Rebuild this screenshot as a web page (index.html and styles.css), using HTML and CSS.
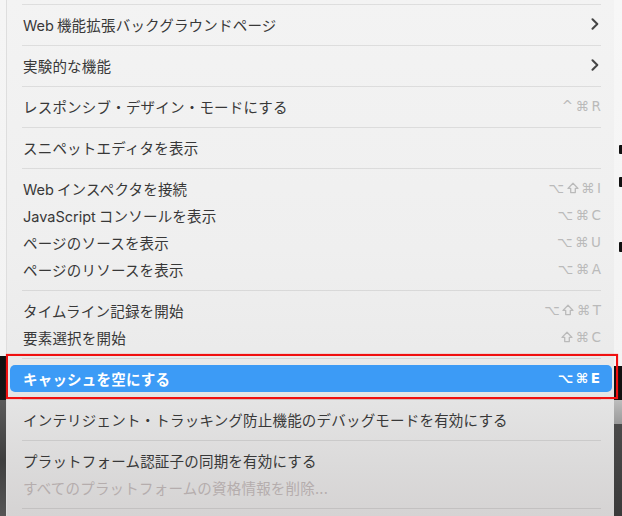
FILE: index.html
```html
<!DOCTYPE html>
<html lang="ja">
<head>
<meta charset="utf-8">
<title>開発メニュー</title>
<link rel="stylesheet" href="styles.css">
</head>
<body>
<div class="screen">
  <div class="edge-left"></div>
  <div class="menu">
    <div class="sep"></div>
    <div class="group">
      <div class="row"><span class="label"><span class="lat">Web</span>機能拡張バックグラウンドページ</span><svg class="chev" width="8" height="12" viewBox="0 0 8 12"><path d="M1.5 1.2 L6.3 6 L1.5 10.8" fill="none" stroke="#454545" stroke-width="2" stroke-linecap="round" stroke-linejoin="round"/></svg></div>
    </div>
    <div class="sep"></div>
    <div class="group">
      <div class="row"><span class="label">実験的な機能</span><svg class="chev" width="8" height="12" viewBox="0 0 8 12"><path d="M1.5 1.2 L6.3 6 L1.5 10.8" fill="none" stroke="#454545" stroke-width="2" stroke-linecap="round" stroke-linejoin="round"/></svg></div>
    </div>
    <div class="sep"></div>
    <div class="group">
      <div class="row"><span class="label">レスポンシブ・デザイン・モードにする</span><span class="key">^⌘R</span></div>
    </div>
    <div class="sep"></div>
    <div class="group">
      <div class="row"><span class="label">スニペットエディタを表示</span></div>
    </div>
    <div class="sep"></div>
    <div class="group">
      <div class="row"><span class="label"><span class="lat">Web</span>インスペクタを接続</span><span class="key">⌥<svg class="shift" width="12" height="12" viewBox="0 0 12 12"><path d="M6 1.2 L11 6.4 H8.3 V10.6 H3.7 V6.4 H1 Z" fill="none" stroke="currentColor" stroke-width="1.3" stroke-linejoin="round"/></svg>⌘I</span></div>
      <div class="row"><span class="label"><span class="lat">JavaScript</span>コンソールを表示</span><span class="key">⌥⌘C</span></div>
      <div class="row"><span class="label">ページのソースを表示</span><span class="key">⌥⌘U</span></div>
      <div class="row"><span class="label">ページのリソースを表示</span><span class="key">⌥⌘A</span></div>
    </div>
    <div class="sep"></div>
    <div class="group">
      <div class="row"><span class="label">タイムライン記録を開始</span><span class="key">⌥<svg class="shift" width="12" height="12" viewBox="0 0 12 12"><path d="M6 1.2 L11 6.4 H8.3 V10.6 H3.7 V6.4 H1 Z" fill="none" stroke="currentColor" stroke-width="1.3" stroke-linejoin="round"/></svg>⌘T</span></div>
      <div class="row"><span class="label">要素選択を開始</span><span class="key"><svg class="shift" width="12" height="12" viewBox="0 0 12 12"><path d="M6 1.2 L11 6.4 H8.3 V10.6 H3.7 V6.4 H1 Z" fill="none" stroke="currentColor" stroke-width="1.3" stroke-linejoin="round"/></svg>⌘C</span></div>
    </div>
    <div class="sep"></div>
    <div class="group">
      <div class="row active"><span class="label">キャッシュを空にする</span><span class="key">⌥⌘E</span></div>
    </div>
    <div class="sep"></div>
    <div class="group">
      <div class="row"><span class="label">インテリジェント・トラッキング防止機能のデバッグモードを有効にする</span></div>
    </div>
    <div class="sep"></div>
    <div class="group">
      <div class="row"><span class="label">プラットフォーム認証子の同期を有効にする</span></div>
      <div class="row disabled"><span class="label">すべてのプラットフォームの資格情報を削除...</span></div>
    </div>
    <div class="sep"></div>
  </div>
  <div class="edge-right">
    <span class="mark m1"></span>
    <span class="mark m2"></span>
    <span class="mark m3"></span>
  </div>
  <div class="annotation"></div>
</div>
</body>
</html>
```
FILE: styles.css
```css
* { box-sizing: border-box; }

html, body {
  margin: 0;
  padding: 0;
  background: #f4f4f4;
}

.screen {
  position: relative;
  width: 622px;
  height: 516px;
  overflow: hidden;
  display: flex;
  font-family: "Inter", "Noto Sans CJK JP", sans-serif;
}

.edge-left {
  width: 6px;
  flex: none;
  background: linear-gradient(to bottom,
    #f5f5f5 0, #f3f3f3 356px,
    #101010 356px, #151515 400px,
    #5a5a5a 400px, #3e3e3e 460px, #555 516px);
}

.edge-right {
  position: relative;
  width: 8px;
  flex: none;
  background: linear-gradient(to bottom,
    #f7f7f7 0, #f3f3f3 366px,
    #111 366px, #111 400px,
    #bdbdbd 400px, #9a9a9a 424px,
    #4a4a4a 424px, #3a3a3a 516px);
}

.mark {
  position: absolute;
  right: 0;
  width: 3px;
  background: #111;
  border-radius: 1px 0 0 1px;
}
.m1 { top: 145px; height: 9px; }
.m2 { top: 177px; height: 10px; }
.m3 { top: 242px; height: 10px; }

.menu {
  width: 608px;
  flex: none;
  height: 516px;
  padding: 3.5px 13px 0 16px;
  border-left: 1px solid #dedede;
  background: linear-gradient(to bottom,
    #f3f3f3 0, #efefef 250px, #ebebeb 350px,
    #e4e4e4 400px, #dcdbdb 460px, #d5d3d3 516px);
  color: #383838;
  font-size: 14.5px;
  letter-spacing: 0.2px;
}

.sep {
  height: 1px;
  margin-left: -1px;
  background: rgba(0, 0, 0, 0.085);
}

.group {
  padding: 6px 0 7px;
}

.row {
  height: 27px;
  display: flex;
  align-items: center;
  justify-content: space-between;
  white-space: nowrap;
}

.lat {
  margin-right: 3px;
  letter-spacing: 0;
}

.chev {
  margin-right: 2px;
}

.key {
  display: flex;
  align-items: center;
  color: #bababa;
  font-family: "DejaVu Sans", "Inter", sans-serif;
  font-size: 13.5px;
  letter-spacing: 2.5px;
  margin-right: -2.5px;
}

.shift {
  margin-right: 2.5px;
}

.row.active {
  margin: 0 -11px 0 -13px;
  padding: 0 12px 0 13px;
  background: #3c9bf6;
  border-radius: 5px;
  color: #ffffff;
  font-weight: 600;
}

.row.active .key {
  color: #ffffff;
  font-weight: bold;
}

.row.disabled {
  color: #b5adad;
}

.annotation {
  position: absolute;
  left: 6px;
  top: 354px;
  width: 612px;
  height: 45px;
  border: 2px solid #f01010;
  box-shadow: 0 0 1px rgba(240, 16, 16, 0.6);
}
```
